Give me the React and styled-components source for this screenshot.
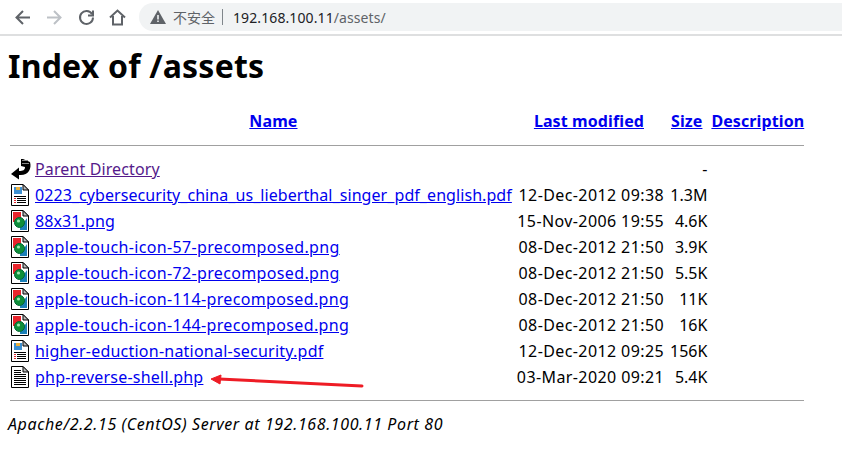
import styled, { createGlobalStyle } from 'styled-components';

const GlobalStyle = createGlobalStyle`
	html, body {
		margin: 0;
		background: white;
		font-family: "Noto Sans", "Noto Sans CJK SC", sans-serif;
		color: black;
	}
`;

const Page = styled.div`
	position: relative;
	width: 842px;
	height: 452px;
	overflow: hidden;
`;

const Toolbar = styled.div`
	display: flex;
	align-items: center;
	height: 34px;
	border-bottom: 2px solid #dedfe0;
	padding-left: 14px;
`;

const NavButton = styled.svg`
	width: 17px;
	height: 17px;
	margin-right: ${(p) => p.$gap}px;
	fill: none;
	stroke: ${(p) => p.$color || '#5f6368'};
	stroke-width: 2;
`;

const AddressBar = styled.div`
	display: flex;
	align-items: center;
	flex: 1;
	height: 28px;
	margin-left: 13px;
	border-radius: 14px 0 0 14px;
	background: #f1f3f4;
	padding-left: 11px;
	font-size: 14px;
`;

const Insecure = styled.span`
	color: #5f6368;
	font-size: 14px;
	margin-left: 7px;
`;

const Divider = styled.span`
	width: 1px;
	height: 16px;
	background: #80868b;
	margin: 0 10px 0 7px;
`;

const Host = styled.span`
	color: #202124;
	letter-spacing: 0.1px;
`;

const UrlPath = styled.span`
	color: #5f6368;
	letter-spacing: 0.1px;
`;

const Content = styled.div`
	padding: 0 8px;
`;

const Title = styled.h1`
	margin: 0;
	padding-top: 8px;
	font-size: 32px;
	line-height: 44px;
	font-weight: 700;
	letter-spacing: 0.2px;
`;

const Listing = styled.table`
	margin-top: 19px;
	border-spacing: 2px;
	border-collapse: separate;
	font-size: 16px;
	line-height: 24px;
`;

const HeadCell = styled.th`
	padding: 0;
	height: 24px;
	font-weight: 700;
	letter-spacing: 0.1px;
	text-align: center;
`;

const DescriptionHead = styled(HeadCell)`
	padding-left: 2px;
`;

const RuleCell = styled.th`
	padding: 0;
`;

const Cell = styled.td`
	padding: 0;
	height: 24px;
	white-space: nowrap;
	vertical-align: middle;
`;

const NameCell = styled(Cell)`
	letter-spacing: ${(p) => p.$tracking}px;
`;

const DateCell = styled(Cell)`
	letter-spacing: 0.4px;
	padding-left: 3px;
	text-align: right;
`;

const SizeCell = styled(Cell)`
	min-width: 35px;
	padding-left: 4px;
	text-align: right;
`;

const FileLink = styled.a`
	color: ${(p) => (p.$visited ? '#551a8b' : '#0000ee')};
	text-decoration: underline;
`;

const Rule = styled.div`
	height: 1px;
	margin: 10px 0 9px;
	background: #a0a0a0;
`;

const Footer = styled.address`
	margin-top: 12px;
	font-size: 16px;
	font-style: italic;
	line-height: 22px;
	letter-spacing: 0.6px;
`;

const FooterRule = styled.div`
	height: 1px;
	width: 794px;
	margin: 9px 0 0 2px;
	background: #a0a0a0;
`;

const ArrowMark = styled.svg`
	position: absolute;
	left: 205px;
	top: 368px;
	width: 165px;
	height: 24px;
`;

const IconSvg = styled.svg`
	display: block;
	width: 22px;
	height: 22px;
	margin-left: 1px;
`;

const Sheet = () => (
	<>
		<path d="M.5 .5H12L17.5 6V21.5H.5Z" fill="#fff" stroke="#000" />
		<path d="M12 .5V6H17.5Z" fill="#bbb" stroke="#000" />
	</>
);

const FileIcon = ({ kind }) => {
	if (kind === 'back') {
		return (
			<IconSvg viewBox="0 0 22 22">
				<path d="M0 16L8 9.5V13C12 13 14 12 14 9L10 8V1H12L19 4C21 11 17 18 8 17V21.5Z" fill="#000" />
				<path d="M11 2.5H17M11 5.5H18" stroke="#888" strokeWidth="1" />
			</IconSvg>
		);
	}
	if (kind === 'image') {
		return (
			<IconSvg viewBox="0 0 22 22">
				<Sheet />
				<path d="M2 2H10V8L5 12H2Z" fill="#e8242c" />
				<path d="M9 18L16 8V20H9Z" fill="#1b80b8" />
				<circle cx="8.5" cy="12.5" r="5" fill="#0f8f3a" stroke="#063" />
				<circle cx="7.5" cy="11" r="1.6" fill="#9fe8b0" />
			</IconSvg>
		);
	}
	if (kind === 'pdf') {
		return (
			<IconSvg viewBox="0 0 22 22">
				<Sheet />
				<path d="M3 3H11V10H3Z" fill="#3d8fd0" />
				<path d="M5 3H9V6H5Z" fill="#e8b040" />
				<path d="M3 12.5H15M6 14.5H15M6 16.5H15M6 18.5H15" stroke="#000" />
				<path d="M3 14.5H5M3 16.5H5M3 18.5H5" stroke="#e0242c" />
			</IconSvg>
		);
	}
	return (
		<IconSvg viewBox="0 0 22 22">
			<Sheet />
			<path d="M3 4.5H10M3 6.5H10M3 8.5H15M3 10.5H15M3 12.5H15M3 14.5H15M3 16.5H15M3 18.5H15" stroke="#000" />
		</IconSvg>
	);
};

const files = [
	{ name: '0223_cybersecurity_china_us_lieberthal_singer_pdf_english.pdf', date: '12-Dec-2012 09:38', size: '1.3M', kind: 'pdf', tracking: 0.07 },
	{ name: '88x31.png', date: '15-Nov-2006 19:55', size: '4.6K', kind: 'image', tracking: 0.1 },
	{ name: 'apple-touch-icon-57-precomposed.png', date: '08-Dec-2012 21:50', size: '3.9K', kind: 'image', tracking: 0.35 },
	{ name: 'apple-touch-icon-72-precomposed.png', date: '08-Dec-2012 21:50', size: '5.5K', kind: 'image', tracking: 0.35 },
	{ name: 'apple-touch-icon-114-precomposed.png', date: '08-Dec-2012 21:50', size: '11K', kind: 'image', tracking: 0.35 },
	{ name: 'apple-touch-icon-144-precomposed.png', date: '08-Dec-2012 21:50', size: '16K', kind: 'image', tracking: 0.35 },
	{ name: 'higher-eduction-national-security.pdf', date: '12-Dec-2012 09:25', size: '156K', kind: 'pdf', tracking: 0.23 },
	{ name: 'php-reverse-shell.php', date: '03-Mar-2020 09:21', size: '5.4K', kind: 'text', tracking: 0.21 },
];

export default function App() {
	return (
		<Page>
			<GlobalStyle />
			<Toolbar>
				<NavButton viewBox="0 0 17 17" $gap={15}>
					<path d="M16 8.5H3M9 2L2.5 8.5L9 15" />
				</NavButton>
				<NavButton viewBox="0 0 17 17" $gap={15} $color="#bdc1c6">
					<path d="M1 8.5H14M8 2L14.5 8.5L8 15" />
				</NavButton>
				<NavButton viewBox="0 0 17 17" $gap={14}>
					<path d="M14 5A6.5 6.5 0 1 0 15 8.5M15 1.5V6.5H10" />
				</NavButton>
				<NavButton viewBox="0 0 17 17" $gap={0}>
					<path d="M1 8.5L8.5 1.5L16 8.5M4 7V15.5H13V7" />
				</NavButton>
				<AddressBar>
					<svg width="16" height="14" viewBox="0 0 16 14">
						<path d="M8 0L16 14H0Z" fill="#5f6368" />
						<path d="M7.2 5H8.8V9.5H7.2ZM7.2 10.5H8.8V12H7.2Z" fill="#f1f3f4" />
					</svg>
					<Insecure>不安全</Insecure>
					<Divider />
					<Host>192.168.100.11</Host>
					<UrlPath>/assets/</UrlPath>
				</AddressBar>
			</Toolbar>
			<Content>
				<Title>Index of /assets</Title>
				<Listing>
					<thead>
						<tr>
							<HeadCell />
							<HeadCell><FileLink href="#">Name</FileLink></HeadCell>
							<HeadCell><FileLink href="#">Last modified</FileLink></HeadCell>
							<HeadCell><FileLink href="#">Size</FileLink></HeadCell>
							<DescriptionHead><FileLink href="#">Description</FileLink></DescriptionHead>
						</tr>
						<tr>
							<RuleCell colSpan="5"><Rule /></RuleCell>
						</tr>
					</thead>
					<tbody>
						<tr>
							<Cell><FileIcon kind="back" /></Cell>
							<NameCell $tracking={0.12}><FileLink href="#" $visited>Parent Directory</FileLink></NameCell>
							<DateCell />
							<SizeCell>-</SizeCell>
							<Cell />
						</tr>
						{files.map((file) => (
							<tr key={file.name}>
								<Cell><FileIcon kind={file.kind} /></Cell>
								<NameCell $tracking={file.tracking}><FileLink href="#">{file.name}</FileLink></NameCell>
								<DateCell>{file.date}</DateCell>
								<SizeCell>{file.size}</SizeCell>
								<Cell />
							</tr>
						))}
					</tbody>
				</Listing>
				<FooterRule />
				<Footer>Apache/2.2.15 (CentOS) Server at 192.168.100.11 Port 80</Footer>
			</Content>
			<ArrowMark viewBox="0 0 165 24">
				<path d="M157 18L14 11" stroke="#ee1c25" strokeWidth="3" strokeLinecap="round" />
				<path d="M6 11L16 7L15 16Z" fill="#ee1c25" stroke="#ee1c25" strokeLinejoin="round" />
			</ArrowMark>
		</Page>
	);
}
